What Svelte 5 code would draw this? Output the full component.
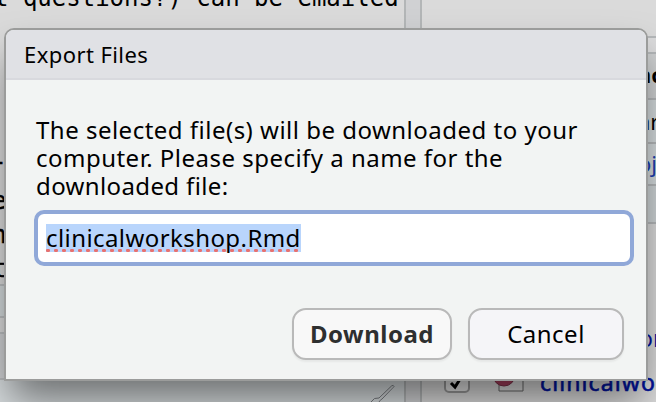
<script>
  const message = [
    { text: 'The selected file(s) will be downloaded to your', spacing: 0.49 },
    { text: 'computer. Please specify a name for the', spacing: 0.48 },
    { text: 'downloaded file:', spacing: 0.37 }
  ];
</script>

<div class="screen">
  <div class="left">
    <div class="code top">t questions?) can be emailed</div>
    <div class="code side"><span class="dash">-</span><span>e</span><span>n</span><span>t</span></div>
    <div class="row tool"></div>
    <div class="row gap"></div>
    <div class="row console"></div>
    <div class="row footer">
      <svg width="28" height="22" viewBox="0 0 28 22" fill="none">
        <path d="m9 18 12.500-12q2-1.500 2.500.5L12 19" stroke="#777a7e" stroke-width="1" />
        <path d="M12 19q-2 1-3 3M9 18q-5-1-8 4" stroke="#777a7e" stroke-width="1" />
        <path d="m10.500 18.500 12.500-12" stroke="#d4d6d9" stroke-width="1" />
      </svg>
    </div>
  </div>
  <div class="splitter"></div>
  <div class="right">
    <div class="cell blank"></div>
    <div class="cell strip"></div>
    <div class="cell tabs"><b>ac</b></div>
    <div class="cell bar"><span>ar</span></div>
    <div class="cell path"><span>oj</span></div>
    <div class="cell heads"></div>
    <div class="files">
      <div class="file first">or</div>
      <div class="file second">
        <svg width="84" height="28" viewBox="0 0 84 28" fill="none">
          <rect x="1" y="1" width="24" height="25" rx="4" fill="#e4e4e4" stroke="#999" stroke-width="2" />
          <path d="m7 17 4 4 7-11" stroke="#000" stroke-width="3" />
          <path d="M55 2h24v23H55z" fill="#dcdcdc" stroke="#666" />
          <circle cx="60" cy="9" r="11" fill="#a8405e" stroke="#7c3148" />
        </svg>
        <span>clinicalworkshop</span>
      </div>
    </div>
  </div>

  <div class="dialog">
    <div class="title">Export Files</div>
    <div class="body">
      <div class="message">
        {#each message as line}
          <div><span style="letter-spacing:{line.spacing}px">{line.text}</span></div>
        {/each}
      </div>
      <div class="input"><span class="selected">clinicalworkshop.Rmd<i></i></span></div>
      <div class="actions">
        <button class="download"><span>Download</span></button>
        <button class="cancel"><span>Cancel</span></button>
      </div>
    </div>
  </div>
</div>

<style>
  .screen {
    position: relative;
    width: 656px;
    height: 402px;
    overflow: hidden;
    display: flex;
    background: #dadada;
    font-family: 'Noto Sans', 'Open Sans', sans-serif;
    color: #000;
    white-space: nowrap;
  }
  .left { width: 404px; height: 402px; flex: none; display: flex; flex-direction: column; overflow: hidden; }
  .code { font: 24px/28px 'DejaVu Sans Mono', monospace; }
  .top { height: 144px; margin-top: -16px; text-indent: -6px; flex: none; }
  .side { box-sizing: border-box; height: 156px; flex: none; display: flex; flex-direction: column; padding-top: 20px; margin-left: -8px; }
  .side span { height: 34px; flex: none; -webkit-text-stroke: 0.4px #000; }
  .side .dash { height: 39px; }
  .row { box-sizing: border-box; flex: none; border-top: 2px solid #bbbec0; }
  .tool { height: 32px; background: #d3d9db; }
  .gap { height: 16px; }
  .console { height: 46px; background: #cfd1d3; }
  .footer { height: 24px; background: #d6dbdd; display: flex; justify-content: flex-end; padding-right: 6px; }
  .splitter { box-sizing: border-box; width: 18px; flex: none; background: #d0d1d3; border: solid #b3b6b7; border-width: 0 2px; }
  .right { flex: none; width: 234px; height: 402px; overflow: hidden; display: flex; flex-direction: column; }
  .cell { box-sizing: border-box; border-bottom: 2px solid #b5b8ba; flex: none; padding-left: 216px; font-size: 22px; line-height: 42px; }
  .blank { height: 38px; }
  .strip { height: 16px; background: #dcdcdd; }
  .tabs { height: 46px; background: #cfd1d2; line-height: 41px; }
  .bar { height: 44px; background: #d4dadc; }
  .path { height: 42px; background: #d4dadc; color: #1b40ae; line-height: 38px; }
  .heads { height: 38px; background: #ced4d6; }
  .files { flex: 1; color: #00129c; font-size: 23px; }
  .file { height: 32px; line-height: 32px; }
  .first { padding: 98px 0 0 217px; }
  .second { display: flex; margin-top: 12px; padding-left: 22px; }
  .second svg { flex: none; }
  .second span { margin-left: 12px; letter-spacing: 1.1px; -webkit-text-stroke: 0.6px #00129c; }

  .dialog {
    position: absolute;
    box-sizing: border-box;
    left: 4px;
    top: 28px;
    width: 644px;
    height: 353px;
    border: 2px solid #9b9c9b;
    border-radius: 10px 10px 0 0;
    background: #f2f4f3;
    box-shadow: 0 24px 40px -6px rgba(0, 0, 0, 0.5);
    overflow: hidden;
  }
  .title {
    box-sizing: border-box;
    height: 50px;
    padding-left: 18px;
    background: #e0e1e5;
    border-bottom: 2px solid #d8d9de;
    font-size: 22px;
    line-height: 49px;
    letter-spacing: 0.42px;
  }
  .body { padding: 36px 12px 0 28px; }
  .message { margin-left: 2px; font-size: 24px; line-height: 28px; height: 94px; }
  .message div { height: 28px; }
  .input {
    box-sizing: border-box;
    width: 600px;
    height: 56px;
    border: 4px solid #90a8d8;
    border-radius: 10px;
    background: #fff;
    display: flex;
    padding: 10px 0 0 8px;
    font-size: 24px;
    line-height: 28px;
    letter-spacing: 0.42px;
  }
  .selected { position: relative; width: 255px; height: 28px; background: #b9d5fc; }
  .selected i {
    position: absolute;
    left: 0;
    right: 0;
    bottom: 0;
    height: 3px;
    background: radial-gradient(circle at 2px 1.5px, #e8716f 1.6px, transparent 2.2px) 0 0 / 8px 3px;
  }
  .actions { display: flex; gap: 16px; padding: 42px 0 0 258px; }
  button {
    box-sizing: border-box;
    height: 52px;
    padding: 0;
    border: 2px solid #b9b9b9;
    border-radius: 14px;
    font: 24px/46px 'Noto Sans', 'Open Sans', sans-serif;
    letter-spacing: 0.5px;
    color: #000;
    box-shadow: 0 2px 2px rgba(0, 0, 0, 0.05);
  }
  .download { width: 160px; background: #f8f8f8; color: #2e2f2f; font-weight: 700; }
  .cancel { width: 156px; background: #f5f5f8; }
</style>
